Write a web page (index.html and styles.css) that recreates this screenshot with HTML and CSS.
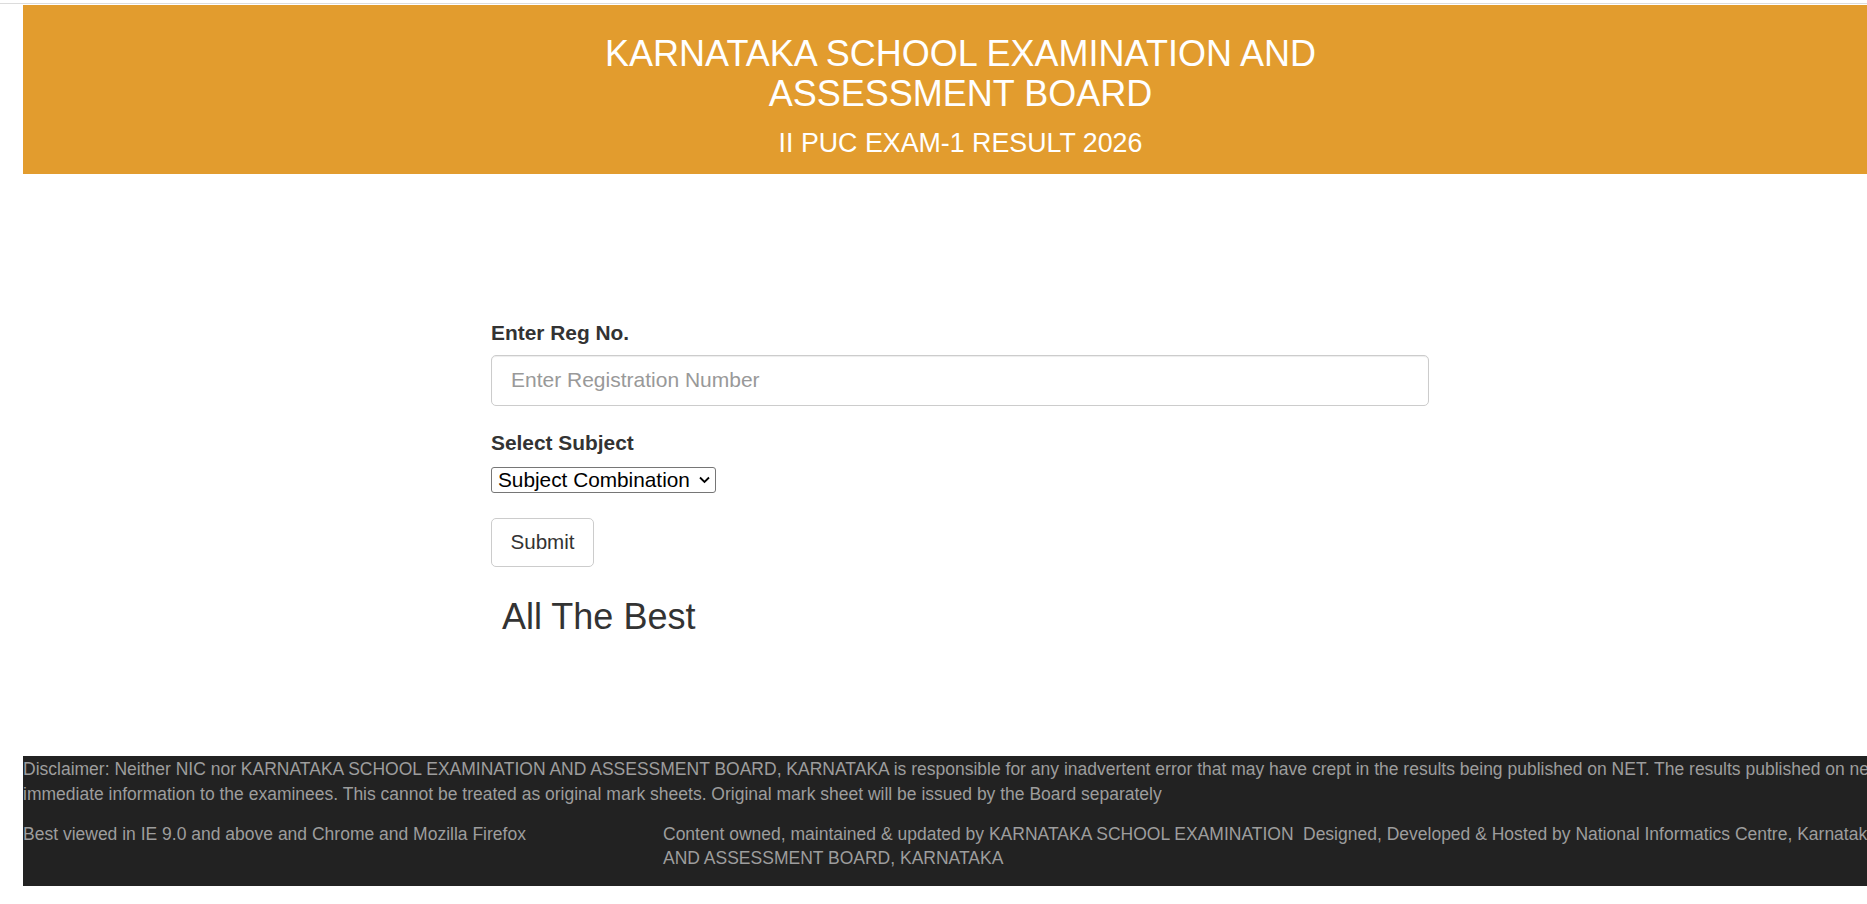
FILE: index.html
```html
<!DOCTYPE html>
<html lang="en">
<head>
<meta charset="utf-8">
<title>KSEAB II PUC Exam-1 Result 2026</title>
<link rel="stylesheet" href="styles.css">
</head>
<body>
<div class="topline"></div>
<header class="banner">
  <h1 class="title">KARNATAKA SCHOOL EXAMINATION AND<br>ASSESSMENT BOARD</h1>
  <h3 class="subtitle">II PUC EXAM-1 RESULT 2026</h3>
</header>

<main class="content">
  <form class="result-form" onsubmit="return false;">
    <label class="field-label" for="regno">Enter Reg No.</label>
    <input class="text-input" id="regno" type="text" placeholder="Enter Registration Number">

    <label class="field-label second" for="subject">Select Subject</label>
    <span class="select-wrap">
      <select class="subject-select" id="subject">
        <option>Subject Combination</option>
      </select>
      <svg class="chev" width="11" height="8" viewBox="0 0 11 8"><path d="M1 1.5 L5.5 6 L10 1.5" fill="none" stroke="#000" stroke-width="1.8"/></svg>
    </span>

    <button class="submit-btn" type="submit">Submit</button>
  </form>
  <h2 class="best">All The Best</h2>
</main>

<footer class="footer">
  <p class="disclaimer">Disclaimer: Neither NIC nor KARNATAKA SCHOOL EXAMINATION AND ASSESSMENT BOARD, KARNATAKA is responsible for any inadvertent error that may have crept in the results being published on NET. The results published on net are for<br>immediate information to the examinees. This cannot be treated as original mark sheets. Original mark sheet will be issued by the Board separately</p>
  <div class="foot-cols">
    <div class="foot-col">Best viewed in IE 9.0 and above and Chrome and Mozilla Firefox</div>
    <div class="foot-col">Content owned, maintained &amp; updated by KARNATAKA SCHOOL EXAMINATION AND ASSESSMENT BOARD, KARNATAKA</div>
    <div class="foot-col nowrap">Designed, Developed &amp; Hosted by National Informatics Centre, Karnataka</div>
  </div>
</footer>
</body>
</html>
```

FILE: styles.css
```css
html {
  overflow-x: hidden;
}
body {
  margin: 0;
  background: #fff;
  font-family: "Liberation Sans", Arial, sans-serif;
  color: #333;
  width: 1960px;
}
.topline {
  margin-top: 3px;
  height: 1px;
  width: 1867px;
  background: #dcdcdc;
}
.banner {
  margin: 1px 0 0 23px;
  width: 1875px;
  background: #e29c2e;
  color: #fff;
  text-align: center;
  padding: 29px 0 16px;
}
.title {
  margin: 0;
  font-size: 36px;
  line-height: 40px;
  font-weight: normal;
}
.subtitle {
  margin: 14px 0 0;
  font-size: 26.8px;
  line-height: 30px;
  font-weight: normal;
}
.content {
  width: 938px;
  margin-left: 491px;
  padding-top: 144px;
}
.result-form {
  display: flex;
  flex-direction: column;
  align-items: flex-start;
}
.field-label {
  font-weight: bold;
  font-size: 20.9px;
  line-height: 29px;
  color: #333;
  margin-bottom: 8px;
}
.field-label.second {
  margin-top: 22px;
  margin-bottom: 10px;
}
.text-input {
  box-sizing: border-box;
  width: 938px;
  height: 51px;
  border: 1px solid #ccc;
  border-radius: 5px;
  box-shadow: inset 0 1px 1px rgba(0,0,0,.075);
  padding: 0 19px 2px;
  font-family: "Liberation Sans", Arial, sans-serif;
  font-size: 21px;
  color: #555;
  outline: none;
}
.text-input::placeholder {
  color: #999;
}
.select-wrap {
  position: relative;
  display: inline-block;
  height: 26px;
}
.subject-select {
  -webkit-appearance: none;
  appearance: none;
  box-sizing: border-box;
  width: 225px;
  height: 26px;
  border: 1px solid #767676;
  border-radius: 3px;
  background: #fff;
  color: #000;
  font-family: "Liberation Sans", Arial, sans-serif;
  font-size: 20.8px;
  line-height: 24px;
  padding: 0 0 0 6px;
  margin: 0;
  outline: none;
}
.chev {
  position: absolute;
  right: 6px;
  top: 9px;
  pointer-events: none;
}
.submit-btn {
  box-sizing: border-box;
  margin-top: 25px;
  width: 103px;
  height: 49px;
  border: 1px solid #ccc;
  border-radius: 5px;
  background: #fff;
  color: #333;
  font-family: "Liberation Sans", Arial, sans-serif;
  font-size: 20.6px;
  padding: 0 0 2px;
}
.best {
  margin: 30px 0 0 11px;
  font-size: 36px;
  line-height: 40px;
  font-weight: normal;
  color: #333;
}
.footer {
  margin: 119px 0 0 23px;
  width: 1920px;
  background: #222;
  color: #9d9d9d;
  font-size: 17.5px;
  line-height: 25px;
  padding: 1px 0 16px;
}
.disclaimer {
  margin: 0;
  white-space: nowrap;
}
.foot-cols {
  margin-top: 15px;
  display: grid;
  grid-template-columns: 640px 640px 640px;
  line-height: 24px;
}
.nowrap {
  white-space: nowrap;
}
```
